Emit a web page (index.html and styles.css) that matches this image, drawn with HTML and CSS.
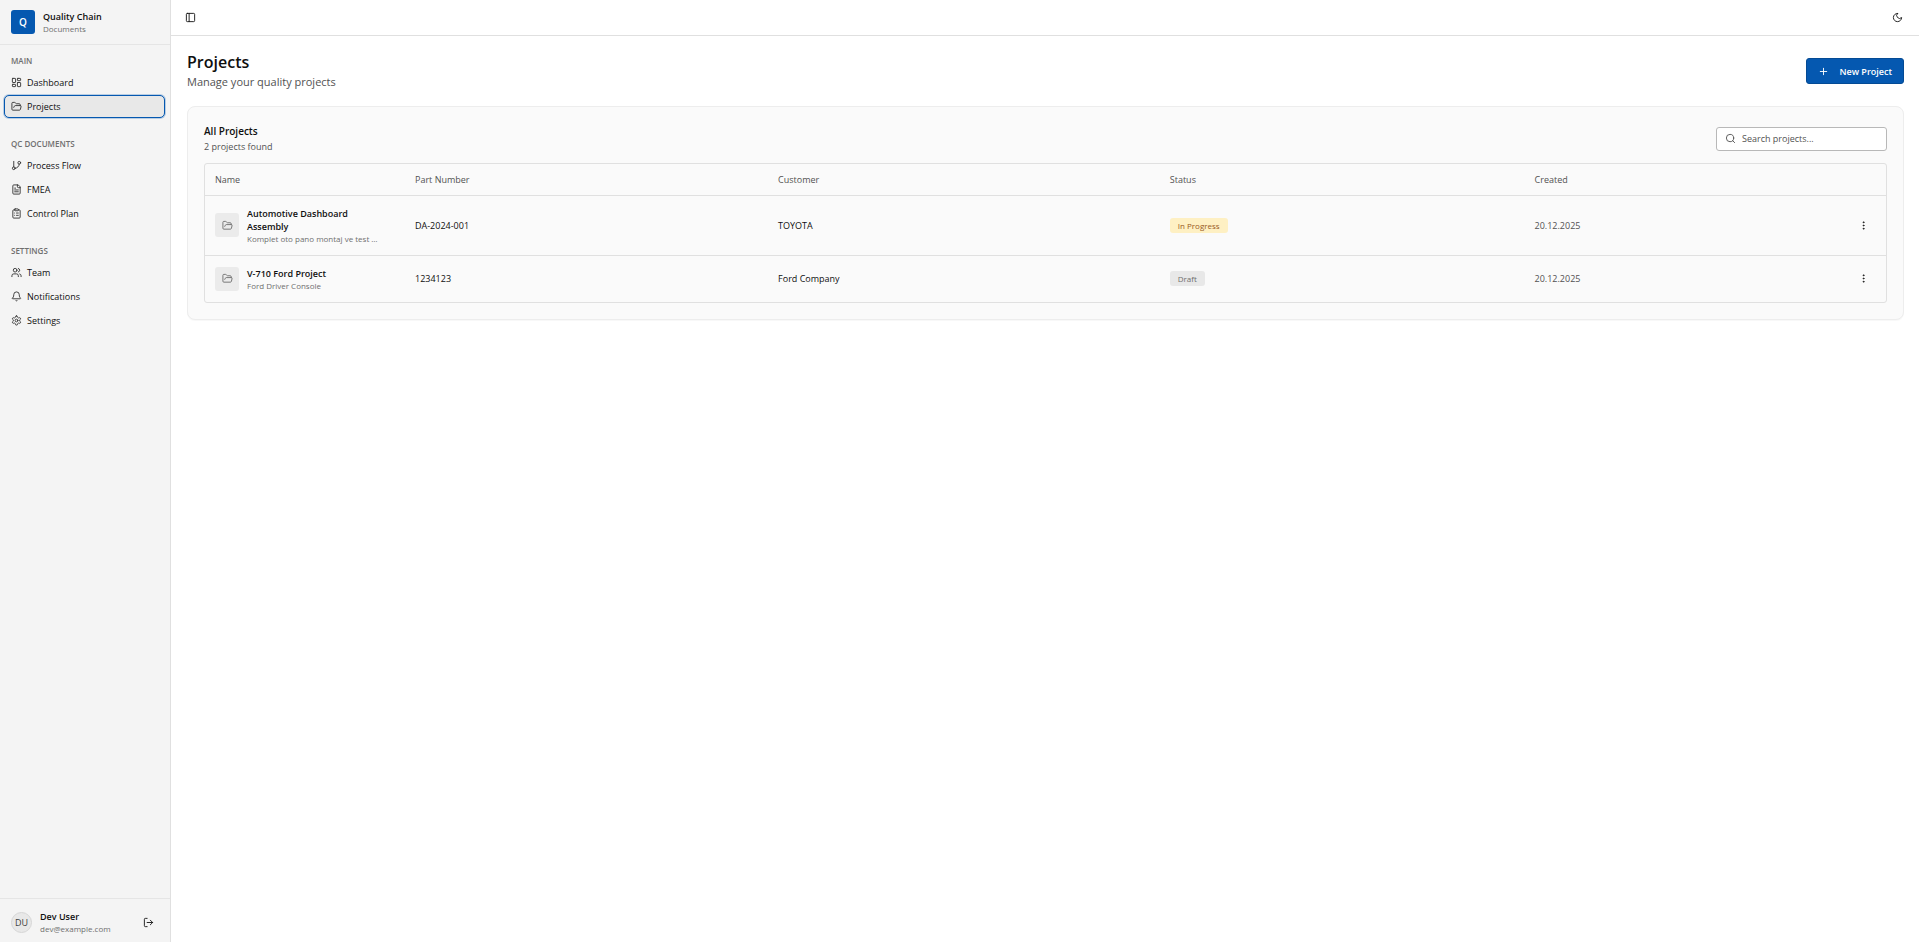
FILE: index.html
```html
<!DOCTYPE html>
<html lang="en">
<head>
<meta charset="utf-8">
<title>Projects - Quality Chain</title>
<link rel="stylesheet" href="styles.css">
</head>
<body>
<svg class="sprite" aria-hidden="true">
  <symbol id="dashboard" viewBox="0 0 24 24"><rect x="3" y="3" width="7" height="9" rx="1"/><rect x="14" y="3" width="7" height="5" rx="1"/><rect x="14" y="12" width="7" height="9" rx="1"/><rect x="3" y="16" width="7" height="5" rx="1"/></symbol>
  <symbol id="folder" viewBox="0 0 24 24"><path d="m6 14 1.5-2.9A2 2 0 0 1 9.24 10H20a2 2 0 0 1 1.94 2.5l-1.54 6a2 2 0 0 1-1.95 1.5H4a2 2 0 0 1-2-2V5a2 2 0 0 1 2-2h3.9a2 2 0 0 1 1.69.9l.81 1.2a2 2 0 0 0 1.67.9H18a2 2 0 0 1 2 2v2"/></symbol>
  <symbol id="branch" viewBox="0 0 24 24"><path d="M6 3v12"/><circle cx="18" cy="6" r="3"/><circle cx="6" cy="18" r="3"/><path d="M18 9a9 9 0 0 1-9 9"/></symbol>
  <symbol id="file" viewBox="0 0 24 24"><path d="M15 2H6a2 2 0 0 0-2 2v16a2 2 0 0 0 2 2h12a2 2 0 0 0 2-2V7Z"/><path d="M14 2v4a2 2 0 0 0 2 2h4M10 9H8M16 13H8M16 17H8"/></symbol>
  <symbol id="clipboard" viewBox="0 0 24 24"><rect x="8" y="2" width="8" height="4" rx="1"/><path d="M16 4h2a2 2 0 0 1 2 2v14a2 2 0 0 1-2 2H6a2 2 0 0 1-2-2V6a2 2 0 0 1 2-2h2M12 11h4M12 16h4M8 11h.01M8 16h.01"/></symbol>
  <symbol id="users" viewBox="0 0 24 24"><path d="M16 21v-2a4 4 0 0 0-4-4H6a4 4 0 0 0-4 4v2"/><circle cx="9" cy="7" r="4"/><path d="M22 21v-2a4 4 0 0 0-3-3.87M16 3.13a4 4 0 0 1 0 7.75"/></symbol>
  <symbol id="bell" viewBox="0 0 24 24"><path d="M10.27 21a2 2 0 0 0 3.46 0M3.26 15.33A1 1 0 0 0 4 17h16a1 1 0 0 0 .74-1.67C19.41 13.96 18 12.5 18 8A6 6 0 0 0 6 8c0 4.5-1.41 5.96-2.74 7.33"/></symbol>
  <symbol id="gear" viewBox="0 0 24 24"><path d="M12.22 2h-.44a2 2 0 0 0-2 2v.18a2 2 0 0 1-1 1.73l-.43.25a2 2 0 0 1-2 0l-.15-.08a2 2 0 0 0-2.73.73l-.22.38a2 2 0 0 0 .73 2.73l.15.1a2 2 0 0 1 1 1.72v.51a2 2 0 0 1-1 1.74l-.15.09a2 2 0 0 0-.73 2.73l.22.38a2 2 0 0 0 2.73.73l.15-.08a2 2 0 0 1 2 0l.43.25a2 2 0 0 1 1 1.73V20a2 2 0 0 0 2 2h.44a2 2 0 0 0 2-2v-.18a2 2 0 0 1 1-1.73l.43-.25a2 2 0 0 1 2 0l.15.08a2 2 0 0 0 2.73-.73l.22-.39a2 2 0 0 0-.73-2.73l-.15-.08a2 2 0 0 1-1-1.74v-.5a2 2 0 0 1 1-1.74l.15-.09a2 2 0 0 0 .73-2.73l-.22-.38a2 2 0 0 0-2.73-.73l-.15.08a2 2 0 0 1-2 0l-.43-.25a2 2 0 0 1-1-1.73V4a2 2 0 0 0-2-2z"/><circle cx="12" cy="12" r="3"/></symbol>
  <symbol id="logout" viewBox="0 0 24 24"><path d="M9 21H5a2 2 0 0 1-2-2V5a2 2 0 0 1 2-2h4M16 17l5-5-5-5M21 12H9"/></symbol>
  <symbol id="panel" viewBox="0 0 24 24"><rect x="3" y="3" width="18" height="18" rx="2"/><path d="M9 3v18"/></symbol>
  <symbol id="moon" viewBox="0 0 24 24"><path d="M12 3a6 6 0 0 0 9 9 9 9 0 1 1-9-9Z"/></symbol>
  <symbol id="plus" viewBox="0 0 24 24"><path d="M5 12h14M12 5v14"/></symbol>
  <symbol id="search" viewBox="0 0 24 24"><circle cx="11" cy="11" r="8"/><path d="m21 21-4.3-4.3"/></symbol>
  <symbol id="more" viewBox="0 0 24 24"><circle cx="12" cy="12" r="1"/><circle cx="12" cy="5" r="1"/><circle cx="12" cy="19" r="1"/></symbol>
</svg>
<div class="app">
  <aside class="sidebar">
    <div class="brand">
      <span class="logo">Q</span>
      <div><div class="brand-name">Quality Chain</div><div class="small">Documents</div></div>
    </div>
    <nav class="nav">
      <section class="group">
        <h2 class="group-title">MAIN</h2>
        <a class="nav-link" href="#dashboard"><svg class="icon"><use href="#dashboard"/></svg>Dashboard</a>
        <a class="nav-link active" href="#projects" aria-current="page"><svg class="icon"><use href="#folder"/></svg>Projects</a>
      </section>
      <section class="group">
        <h2 class="group-title">QC DOCUMENTS</h2>
        <a class="nav-link" href="#flow"><svg class="icon"><use href="#branch"/></svg>Process Flow</a>
        <a class="nav-link" href="#fmea"><svg class="icon"><use href="#file"/></svg>FMEA</a>
        <a class="nav-link" href="#plan"><svg class="icon"><use href="#clipboard"/></svg>Control Plan</a>
      </section>
      <section class="group">
        <h2 class="group-title">SETTINGS</h2>
        <a class="nav-link" href="#team"><svg class="icon"><use href="#users"/></svg>Team</a>
        <a class="nav-link" href="#notifications"><svg class="icon"><use href="#bell"/></svg>Notifications</a>
        <a class="nav-link" href="#settings"><svg class="icon"><use href="#gear"/></svg>Settings</a>
      </section>
    </nav>
    <div class="account">
      <span class="avatar">DU</span>
      <div class="account-text"><div class="account-name">Dev User</div><div class="small">dev@example.com</div></div>
      <button class="icon-button" type="button" aria-label="Log out"><svg class="icon"><use href="#logout"/></svg></button>
    </div>
  </aside>
  <div class="content">
    <header class="topbar">
      <button class="icon-button" type="button" aria-label="Toggle sidebar"><svg class="icon"><use href="#panel"/></svg></button>
      <button class="icon-button" type="button" aria-label="Toggle theme"><svg class="icon"><use href="#moon"/></svg></button>
    </header>
    <main class="main">
      <div class="page-head">
        <div><h1 class="title">Projects</h1><p class="subtitle">Manage your quality projects</p></div>
        <button class="primary" type="button"><svg class="icon"><use href="#plus"/></svg>New Project</button>
      </div>
      <section class="card">
        <div class="card-head">
          <div><h2 class="card-title">All Projects</h2><p class="card-note">2 projects found</p></div>
          <label class="search"><svg class="icon"><use href="#search"/></svg><input class="search-input" type="text" placeholder="Search projects..." aria-label="Search projects"></label>
        </div>
        <div class="table-wrap">
          <table class="table">
            <colgroup><col class="col-name"><col class="col-part"><col class="col-customer"><col class="col-status"><col class="col-created"><col class="col-actions"></colgroup>
            <thead><tr><th>Name</th><th>Part Number</th><th>Customer</th><th>Status</th><th>Created</th><th></th></tr></thead>
            <tbody>
              <tr>
                <td><div class="project"><span class="tile"><svg class="icon"><use href="#folder"/></svg></span><div class="project-text"><div class="project-name">Automotive Dashboard Assembly</div><div class="small note">Komplet oto pano montaj ve test …</div></div></div></td>
                <td>DA-2024-001</td><td>TOYOTA</td><td><span class="badge progress">In Progress</span></td><td class="muted">20.12.2025</td>
                <td class="actions"><button class="icon-button row-menu" type="button" aria-label="Project actions"><svg class="icon"><use href="#more"/></svg></button></td>
              </tr>
              <tr>
                <td><div class="project"><span class="tile"><svg class="icon"><use href="#folder"/></svg></span><div class="project-text"><div class="project-name">V-710 Ford Project</div><div class="small note">Ford Driver Console</div></div></div></td>
                <td>1234123</td><td>Ford Company</td><td><span class="badge">Draft</span></td><td class="muted">20.12.2025</td>
                <td class="actions"><button class="icon-button row-menu" type="button" aria-label="Project actions"><svg class="icon"><use href="#more"/></svg></button></td>
              </tr>
            </tbody>
          </table>
        </div>
      </section>
    </main>
  </div>
</div>
</body>
</html>
```
FILE: styles.css
```css
* { box-sizing: border-box; }
body, h1, h2, p { margin: 0; }
body {
  background: #fff;
  color: #0f0f0f;
  font: 9px/13px "Open Sans", sans-serif;
}
button, input { font: inherit; color: inherit; }
.sprite { display: none; }
.icon {
  width: 11px;
  height: 11px;
  flex: none;
  fill: none;
  stroke: currentColor;
  stroke-width: 2;
  stroke-linecap: round;
  stroke-linejoin: round;
}
.icon-button {
  display: inline-flex;
  padding: 5px;
  border: 0;
  background: none;
  color: #161616;
}
.small { font-size: 8px; line-height: 11px; color: #6f6f6f; }

.app { display: flex; min-height: 100vh; }
.sidebar {
  display: flex;
  flex-direction: column;
  width: 171px;
  flex: none;
  background: #f4f4f4;
  border-right: 1px solid #e0e0e0;
}
.brand {
  display: flex;
  align-items: center;
  gap: 8px;
  height: 45px;
  padding: 0 11px;
  border-bottom: 1px solid #e5e5e5;
}
.logo {
  display: grid;
  place-items: center;
  width: 24px;
  height: 24px;
  border-radius: 3px;
  background: #0558b0;
  color: #fff;
  font-size: 10px;
  font-weight: 600;
}
.brand-name, .account-name, .project-name { font-weight: 600; }
.brand-name { line-height: 12px; }
.nav { flex: 1; padding: 7px 6px 7px 5px; }
.group { display: flex; flex-direction: column; gap: 3px; margin-bottom: 18px; }
.group-title {
  padding: 2px 6px;
  font-size: 8px;
  line-height: 13px;
  font-weight: 600;
  color: #6f6f6f;
}
.nav-link {
  display: flex;
  align-items: center;
  gap: 5px;
  height: 21px;
  padding: 0 6px;
  border-radius: 4px;
  color: inherit;
  text-decoration: none;
}
.nav-link .icon { color: #333; }
.active {
  background: #e8e8e8;
  outline: 1px solid #0558b0;
  box-shadow: 0 0 0 2px rgba(5, 88, 176, 0.25);
}
.account {
  display: flex;
  align-items: center;
  gap: 8px;
  padding: 11px 11px 8px;
  border-top: 1px solid #e5e5e5;
}
.account-text { flex: 1; }
.avatar {
  display: grid;
  place-items: center;
  width: 21px;
  height: 21px;
  border: 1px solid #d6d6d6;
  border-radius: 50%;
  background: #e8e8e8;
  color: #404040;
}

.content { flex: 1; min-width: 0; }
.topbar {
  display: flex;
  align-items: center;
  justify-content: space-between;
  height: 36px;
  padding: 0 11px 0 9px;
  border-bottom: 1px solid #e0e0e0;
}
.main { padding: 16px 15px 16px 16px; }
.page-head { display: flex; align-items: center; justify-content: space-between; margin-bottom: 16px; }
.title { font-size: 16px; line-height: 21px; font-weight: 600; }
.subtitle { font-size: 11px; line-height: 17px; color: #525252; }
.primary {
  display: flex;
  align-items: center;
  gap: 10px;
  height: 26px;
  padding: 0 11px;
  border: 1px solid #044a94;
  border-radius: 3px;
  background: #0558b0;
  color: #fff;
  font-weight: 600;
}
.card {
  padding: 16px;
  border: 1px solid #ededed;
  border-radius: 8px;
  background: #fafafa;
  box-shadow: 0 1px 1px rgba(0, 0, 0, 0.03);
}
.card-head { display: flex; align-items: center; justify-content: space-between; margin-bottom: 9px; }
.card-title { font-size: 10px; line-height: 17px; font-weight: 600; }
.card-note { line-height: 14px; color: #525252; }
.search {
  display: flex;
  align-items: center;
  gap: 6px;
  width: 171px;
  height: 24px;
  padding: 0 8px;
  border: 1px solid #b8b8b8;
  border-radius: 3px;
  background: #fff;
  color: #525252;
}
.search-input { flex: 1; min-width: 0; padding: 0; border: 0; outline: 0; background: none; }
.search-input::placeholder { color: #525252; opacity: 1; }
.table-wrap { border: 1px solid #e0e0e0; border-radius: 3px; }
.table { width: 100%; border-collapse: collapse; table-layout: fixed; }
.col-name { width: 200px; }
.col-part { width: 21.6%; }
.col-customer { width: 23.3%; }
.col-status { width: 21.7%; }
.col-created { width: 18%; }
.table th, .table td { padding: 0 10px; text-align: left; vertical-align: middle; }
.table th { height: 31px; font-weight: 500; color: #525252; }
.table td { padding-block: 11px; border-top: 1px solid #e0e0e0; }
.table td.muted { color: #525252; }
.table td.actions { padding-block: 0; text-align: right; }
.row-menu { padding: 7px; vertical-align: middle; }
.project { display: flex; align-items: center; gap: 8px; }
.project-text { min-width: 0; width: 133px; }
.note { white-space: nowrap; }
.tile {
  display: grid;
  place-items: center;
  width: 24px;
  height: 24px;
  flex: none;
  border-radius: 3px;
  background: #ebebeb;
  color: #6f6f6f;
}
.badge {
  display: inline-block;
  padding: 0 8px;
  border-radius: 3px;
  background: #e8e8e8;
  color: #6f6f6f;
  font-size: 8px;
  line-height: 15px;
  font-weight: 500;
}
.progress { background: #fef0c3; color: #9a5a1e; }
```
